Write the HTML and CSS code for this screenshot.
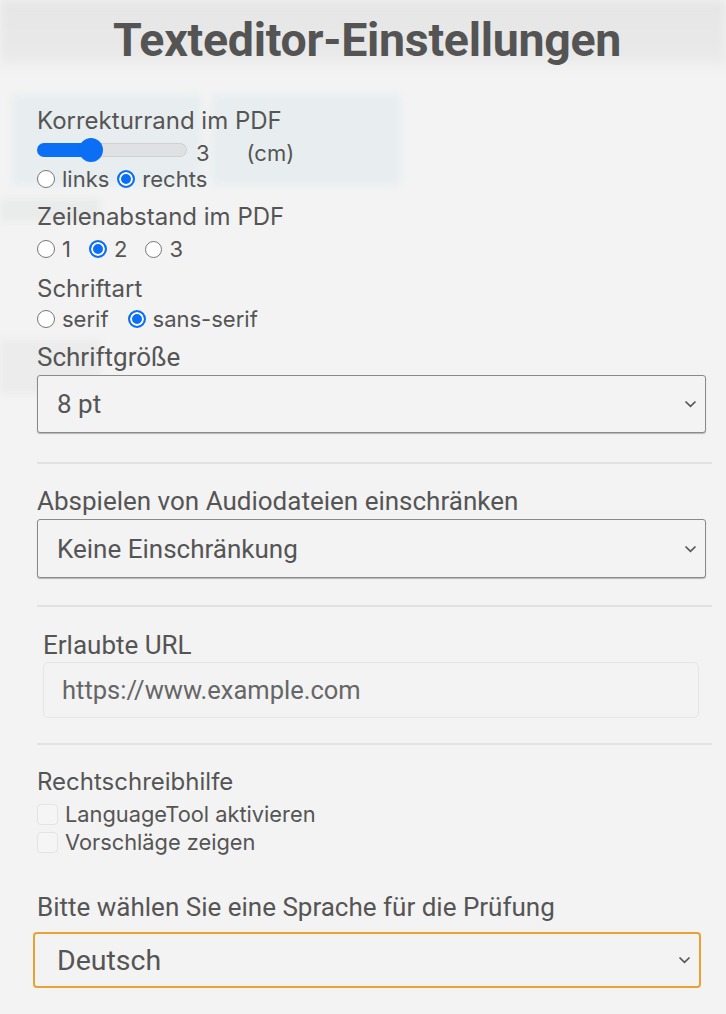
FILE: index.html
```html
<!DOCTYPE html>
<html lang="de">
<head>
<meta charset="utf-8">
<title>Texteditor-Einstellungen</title>
<link rel="stylesheet" href="styles.css">
</head>
<body>
<div class="backdrop" aria-hidden="true">
  <div class="bd bd-top"></div>
  <div class="bd bd-a"></div>
  <div class="bd bd-b"></div>
  <div class="bd bd-c"></div>
  <div class="bd bd-d"></div>
</div>
<main class="dialog">
  <h1 class="title">Texteditor-Einstellungen</h1>

  <section class="group g1">
    <div class="lbl inter">Korrekturrand im PDF</div>
    <div class="slider-row">
      <div class="slider"><div class="fill"></div><div class="thumb"></div><div class="rest"></div></div>
      <span class="val">3</span>
      <span class="unit">(cm)</span>
    </div>
    <div class="radios r1">
      <label class="radio"><span class="rb"></span>links</label>
      <label class="radio"><span class="rb on"></span>rechts</label>
    </div>
  </section>

  <section class="group g2">
    <div class="lbl inter">Zeilenabstand im PDF</div>
    <div class="radios sp">
      <label class="radio"><span class="rb"></span>1</label>
      <label class="radio"><span class="rb on"></span>2</label>
      <label class="radio"><span class="rb sm"></span>3</label>
    </div>
  </section>

  <section class="group g3">
    <div class="lbl inter">Schriftart</div>
    <div class="radios sp2">
      <label class="radio"><span class="rb"></span>serif</label>
      <label class="radio"><span class="rb on"></span>sans-serif</label>
    </div>
  </section>

  <section class="group g4">
    <div class="lbl rob">Schriftgröße</div>
    <div class="select">
      <span>8 pt</span>
      <svg width="13" height="8" viewBox="0 0 13 8"><path d="M1.5 1.5 L6.5 6.3 L11.5 1.5" fill="none" stroke="#555" stroke-width="1.7"/></svg>
    </div>
  </section>

  <hr class="sep sep1">

  <section class="group g5">
    <div class="lbl rob">Abspielen von Audiodateien einschränken</div>
    <div class="select tall">
      <span>Keine Einschränkung</span>
      <svg width="13" height="8" viewBox="0 0 13 8"><path d="M1.5 1.5 L6.5 6.3 L11.5 1.5" fill="none" stroke="#555" stroke-width="1.7"/></svg>
    </div>
  </section>

  <hr class="sep sep2">

  <section class="group url">
    <div class="lbl rob">Erlaubte URL</div>
    <div class="input">https://www.example.com</div>
  </section>

  <hr class="sep sep3">

  <section class="group spell">
    <div class="lbl inter">Rechtschreibhilfe</div>
    <label class="check"><span class="cb"></span>LanguageTool aktivieren</label>
    <label class="check"><span class="cb"></span>Vorschläge zeigen</label>
  </section>

  <section class="group lang">
    <div class="lbl rob">Bitte wählen Sie eine Sprache für die Prüfung</div>
    <div class="select focus">
      <span>Deutsch</span>
      <svg width="13" height="8" viewBox="0 0 13 8"><path d="M1.5 1.5 L6.5 6.3 L11.5 1.5" fill="none" stroke="#555" stroke-width="1.7"/></svg>
    </div>
  </section>
</main>
</body>
</html>
```

FILE: styles.css
```css
* { box-sizing: border-box; }
html, body { margin: 0; padding: 0; }
body {
  background: #f3f3f3;
  color: #555;
  font-family: Inter, "Noto Sans", sans-serif;
  width: 726px;
  height: 1014px;
  overflow: hidden;
  position: relative;
}
.backdrop { position: absolute; inset: 0; z-index: 0; }
.bd { position: absolute; filter: blur(3px); }
.bd-top { left: 0; top: 0; width: 726px; height: 66px; background: linear-gradient(#e6e6e6, #e9e9e9 80%, #eeeeee); filter: blur(4px); }
.bd-a { left: 12px; top: 94px; width: 190px; height: 92px; background: #e8eef0; border-radius: 6px; }
.bd-b { left: 211px; top: 94px; width: 190px; height: 92px; background: #e8eef0; border-radius: 6px; }
.bd-c { left: 0; top: 198px; width: 100px; height: 24px; background: #eaecec; }
.bd-d { left: 0; top: 340px; width: 100px; height: 54px; background: #ececec; }

.dialog {
  position: relative;
  z-index: 1;
  padding: 0 20px 0 37px;
}
.title {
  margin: 0 0 0 -9px;
  padding-top: 14px;
  text-align: center;
  font-family: Roboto, sans-serif;
  font-weight: 700;
  font-size: 46.5px;
  line-height: 52px;
  color: #545454;
  letter-spacing: -0.3px;
}
.group { display: flex; flex-direction: column; }
.lbl { font-size: 24px; line-height: 28px; color: #555; }
.inter { font-family: Inter, sans-serif; font-size: 24px; }
.rob { font-family: Roboto, sans-serif; font-size: 26px; }

.g1 { margin-top: 41px; }
.slider-row { display: flex; align-items: center; height: 30px; }
.slider { display: flex; align-items: center; width: 150px; height: 24px; }
.slider .fill { width: 46px; height: 14px; background: #0b6ff5; border-radius: 7px 0 0 7px; margin-right: -4px; }
.slider .thumb { width: 24px; height: 24px; border-radius: 50%; background: #0b6ff5; position: relative; z-index: 1; }
.slider .rest { flex: 1; height: 14px; background: #dfe1e2; border: 1px solid #cfd2d3; border-left: none; border-radius: 0 7px 7px 0; margin-left: -4px; }
.val { font-size: 22px; margin-left: 9px; margin-top: 6px; }
.unit { font-size: 22px; margin-left: 37px; margin-top: 6px; }

.radios { display: flex; font-size: 22px; line-height: 28px; height: 28px; }
.r1 { gap: 8px; }
.radios.sp { gap: 18px; margin-top: 4px; }
.radios.sp2 { gap: 19px; margin-top: 2px; }
.radio { display: flex; align-items: center; gap: 7px; }
.rb {
  width: 18px; height: 18px; border-radius: 50%;
  border: 1.5px solid #767676; background: #fff;
  display: inline-block; flex: none;
}
.rb.sm { width: 17px; height: 17px; }
.rb.on { border: 2px solid #0b6ff5; box-shadow: inset 0 0 0 2px #fff; background: #0b6ff5; }

.g2 { margin-top: 10px; }
.g3 { margin-top: 12px; }
.g4 { margin-top: 10px; }

.select {
  display: flex; align-items: center; justify-content: space-between;
  height: 58px; width: 669px;
  margin-top: 4px;
  border: 1px solid #8a8a8a; border-radius: 3px;
  box-shadow: 0 1px 1px rgba(0,0,0,0.25);
  padding: 0 8px 0 19px;
  font-family: Roboto, sans-serif; font-size: 26px; color: #555;
  background: #f3f3f3;
}
.select.tall { height: 59px; }
.sep { border: none; height: 2px; background: #e2e2e2; margin: 0; width: 675px; }
.sep1 { margin-top: 29px; }
.g5 { margin-top: 23px; }
.sep2 { margin-top: 27px; }
.url { margin-top: 24px; padding-left: 6px; }
.input {
  margin-top: 3px;
  width: 656px; height: 56px;
  border: 1.5px solid #e6e6e6; border-radius: 5px;
  display: flex; align-items: center; padding-left: 18px;
  font-family: Roboto, sans-serif; font-size: 25.5px; color: #666;
}
.sep3 { margin-top: 25px; }

.spell { margin-top: 23px; }
.spell .lbl { margin-bottom: 4px; }
.check { display: flex; align-items: center; gap: 7px; font-size: 21.8px; line-height: 28px; height: 28px; font-family: Inter, sans-serif; }
.cb { width: 21px; height: 21px; border: 1.5px solid #e4e4e4; border-radius: 4px; background: #f5f5f5; display: inline-block; flex: none; }

.lang { margin-top: 37px; }
.select.focus {
  margin-top: 11px;
  border: 2px solid #e8a230; border-radius: 4px; margin-left: -4px; width: 668px; height: 56px;
  font-size: 28.5px; padding-left: 22px; box-shadow: none;
}
```
